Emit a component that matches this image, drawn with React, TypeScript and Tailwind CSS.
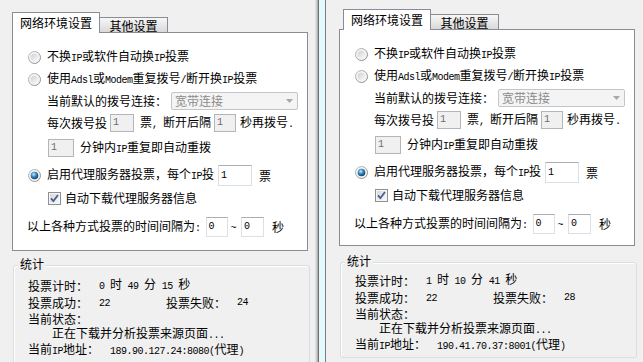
import React from "react";

// half-width latin runs (the original uses a bitmap font with narrow latin glyphs)
const M = ({ children }: { children: React.ReactNode }) => (
  <span className="font-['Liberation_Mono',monospace] text-[10px] tracking-[-0.5px] whitespace-pre">
    {children}
  </span>
);

function Radio({ checked = false }: { checked?: boolean }) {
  return (
    <svg width="13" height="13" viewBox="0 0 13 13" className="shrink-0">
      <defs>
        <linearGradient id="radio-ring" x1="0" y1="0" x2="1" y2="1">
          <stop offset="0" stopColor="#c2c2c2" />
          <stop offset="1" stopColor="#858585" />
        </linearGradient>
        <linearGradient id="radio-face" x1="0" y1="0" x2="1" y2="1">
          <stop offset="0" stopColor="#cfcfcf" />
          <stop offset="1" stopColor="#fbfbfb" />
        </linearGradient>
        <radialGradient id="radio-dot" cx="0.4" cy="0.35" r="0.7">
          <stop offset="0" stopColor="#c2f0ff" />
          <stop offset="0.45" stopColor="#3b8cc2" />
          <stop offset="1" stopColor="#0c355c" />
        </radialGradient>
      </defs>
      <circle cx="6.5" cy="6.5" r="6" fill="#f3f3f3" stroke="url(#radio-ring)" />
      <circle cx="6.5" cy="6.5" r="3.8" fill={checked ? "url(#radio-dot)" : "url(#radio-face)"} />
    </svg>
  );
}

function Check() {
  return (
    <svg width="13" height="13" viewBox="0 0 13 13" className="shrink-0">
      <defs>
        <linearGradient id="check-face" x1="0" y1="0" x2="1" y2="1">
          <stop offset="0" stopColor="#d8d8d8" />
          <stop offset="1" stopColor="#f8f8f8" />
        </linearGradient>
      </defs>
      <rect x="0.5" y="0.5" width="12" height="12" fill="#f6f6f6" stroke="#8e8f8f" />
      <rect x="2" y="2" width="9" height="9" fill="url(#check-face)" />
      <path d="M3 6.3 L5.4 9 L10 3" fill="none" stroke="#4a5e92" strokeWidth="1.8" />
    </svg>
  );
}

function Field({
  v,
  size,
  disabled = false,
}: {
  v: string;
  size: string;
  disabled?: boolean;
}) {
  return (
    <div
      className={`${size} shrink-0 flex items-center pl-[2px] border ${
        disabled
          ? "bg-[#f0f0f0] border-[#b2b6bb] text-[#6d6d6d]"
          : "bg-white border-[#dbdfe6] border-t-[#abadb3] text-black"
      }`}
    >
      <M>{v}</M>
    </div>
  );
}

type PanelProps = {
  top: string;
  left: string;
  tabPad: string;
  boxH: string;
  gap: string;
  groupH: string;
  statsPad: string;
  timer: [string, string, string];
  ok: string;
  fail: string;
  ip: string;
};

function Panel(p: PanelProps) {
  return (
    <div className={`flex flex-col ${p.top} ${p.left}`}>
      <div className={`flex items-end h-[21px] mb-[-1px] ${p.tabPad}`}>
        <div className="relative z-10 h-[21px] w-[88px] border border-b-0 border-[#898c95] bg-white flex items-center justify-center pb-[1px]">
          网络环境设置
        </div>
        <div className="h-[16px] w-[68px] border border-l-0 border-[#898c95] bg-gradient-to-b from-[#f7f7f7] to-[#d9d9d9] flex items-center justify-center pt-[2px]">
          其他设置
        </div>
      </div>

      <div className={`w-[296px] ${p.boxH} border border-[#898c95] bg-white flex flex-col pt-[16px]`}>
        <div className="h-[16px] flex items-center pl-[15px]">
          <Radio />
          <span className="ml-[6px]">
            不换<M>IP</M>或软件自动换<M>IP</M>投票
          </span>
        </div>
        <div className="mt-[6px] h-[16px] flex items-center pl-[15px]">
          <Radio />
          <span className="ml-[6px]">
            使用<M>Adsl</M>或<M>Modem</M>重复拨号<M>/</M>断开换<M>IP</M>投票
          </span>
        </div>
        <div className="mt-[5px] h-[18px] flex items-center pl-[34px]">
          <span>当前默认的拨号连接：</span>
          <div className="ml-[4px] w-[127px] h-[18px] rounded-[2px] border border-[#c5c5c5] bg-[#f4f4f4] flex items-center justify-between pl-[3px] pr-[4px] text-[#8b8b8b]">
            <span>宽带连接</span>
            <svg width="7" height="4" viewBox="0 0 7 4">
              <path d="M0 0 H7 L3.5 4 Z" fill="#a8a8a8" />
            </svg>
          </div>
        </div>
        <div className="mt-[4px] h-[18px] flex items-center pl-[34px]">
          <span>每次拨号投</span>
          <div className="ml-[3px]">
            <Field v="1" size="w-[24px] h-[18px]" disabled />
          </div>
          <span className="ml-[6px]">
            票<M>, </M>断开后隔
          </span>
          <div className="ml-[3px]">
            <Field v="1" size="w-[22px] h-[18px]" disabled />
          </div>
          <span className="ml-[4px]">
            秒再拨号<M>.</M>
          </span>
        </div>
        <div className="mt-[7px] h-[18px] flex items-center pl-[35px]">
          <Field v="1" size="w-[26px] h-[18px]" disabled />
          <span className="ml-[6px]">
            分钟内<M>IP</M>重复即自动重拨
          </span>
        </div>
        <div className="mt-[8px] h-[21px] flex items-center pl-[15px]">
          <Radio checked />
          <span className="ml-[6px]">
            启用代理服务器投票，每个<M>IP</M>投
          </span>
          <div className="ml-[4px]">
            <Field v="1" size="w-[34px] h-[21px]" />
          </div>
          <span className="ml-[7px]">票</span>
        </div>
        <div className="mt-[5px] h-[14px] flex items-center pl-[35px]">
          <Check />
          <span className="ml-[4px]">自动下载代理服务器信息</span>
        </div>
        <div className="mt-[12px] h-[20px] flex items-center pl-[14px]">
          <span>
            以上各种方式投票的时间间隔为<M>:</M>
          </span>
          <div className="ml-[5px]">
            <Field v="0" size="w-[22px] h-[20px]" />
          </div>
          <span className="ml-[3px]">
            <M>~</M>
          </span>
          <div className="ml-[5px]">
            <Field v="0" size="w-[23px] h-[20px]" />
          </div>
          <span className="ml-[8px]">秒</span>
        </div>
      </div>

      <div
        className={`relative ml-[1px] w-[297px] ${p.groupH} ${p.gap} ${p.statsPad} rounded-[3px] border border-[#d5dfe5] shadow-[inset_1px_1px_0_#ffffff] pl-[14px] flex flex-col`}
      >
        <span className="absolute left-[4px] top-[-9px] bg-[#f0f0f0] px-[2px] leading-[14px]">统计</span>
        <div className="h-[17px] shrink-0 flex items-center">
          <span className="w-[71px] shrink-0">投票计时：</span>
          <span>
            <M>{p.timer[0]} </M>时<M> {p.timer[1]} </M>分<M> {p.timer[2]} </M>秒
          </span>
        </div>
        <div className="h-[17px] shrink-0 flex items-center">
          <span className="w-[71px] shrink-0">投票成功：</span>
          <span className="w-[67px] shrink-0">
            <M>{p.ok}</M>
          </span>
          <span className="w-[71px] shrink-0">投票失败：</span>
          <M>{p.fail}</M>
        </div>
        <div className="h-[16px] shrink-0 flex items-center">当前状态：</div>
        <div className="h-[15px] shrink-0 flex items-center pl-[24px]">
          <span>
            正在下载并分析投票来源页面<M>...</M>
          </span>
        </div>
        <div className="h-[17px] shrink-0 flex items-center">
          <span className="w-[82px] shrink-0">
            当前<M>IP</M>地址：
          </span>
          <span>
            <M>{p.ip}(</M>代理<M>)</M>
          </span>
        </div>
      </div>
    </div>
  );
}

export default function App() {
  return (
    <div className="w-[643px] h-[362px] overflow-hidden bg-[#f0f0f0] flex font-['Noto_Sans_CJK_SC',sans-serif] text-[12px] leading-[14px] text-black">
      <div className="w-[315px] shrink-0">
        <Panel
          top="pt-[12px]"
          left="pl-[12px]"
          tabPad="pl-0"
          boxH="h-[219px]"
          gap="mt-[14px]"
          groupH="h-[100px]"
          statsPad="pt-[11px]"
          timer={["0", "49", "15"]}
          ok="22"
          fail="24"
          ip="189.90.127.24:8080"
        />
      </div>
      <div className="w-[3px] shrink-0 bg-gradient-to-r from-[#ececec] to-[#a9a9a9]" />
      <div className="w-[1px] shrink-0 bg-[#6f6f6f]" />
      <div className="w-[6px] shrink-0 bg-[#e4f9fc]" />
      <div className="w-[1px] shrink-0 bg-[#7c7c7c]" />
      <div className="flex-1">
        <Panel
          top="pt-[9px]"
          left="pl-[13px]"
          tabPad="pl-[4px]"
          boxH="h-[217px]"
          gap="mt-[16px]"
          groupH="h-[96px]"
          statsPad="pt-[9px]"
          timer={["1", "10", "41"]}
          ok="22"
          fail="28"
          ip="190.41.70.37:8001"
        />
      </div>
    </div>
  );
}
